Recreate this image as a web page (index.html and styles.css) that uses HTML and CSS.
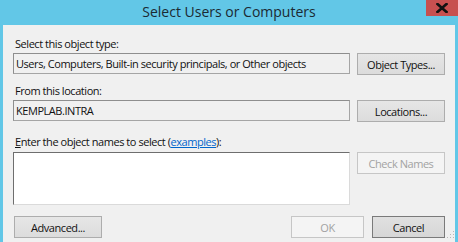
FILE: index.html
```html
<!DOCTYPE html>
<html>
<head>
<meta charset="utf-8">
<link rel="stylesheet" href="styles.css">
</head>
<body>
<div class="window">
  <div class="titlebar">
    <span class="title">Select Users or Computers</span>
    <div class="close"><svg width="12" height="10" viewBox="0 0 12 10"><path d="M1.5 1 L10.5 9 M10.5 1 L1.5 9" stroke="#111" stroke-width="2.6" stroke-linecap="square"/></svg></div>
  </div>
  <div class="client">
    <div class="label l1">Select this object type:</div>
    <div class="row r1">
      <div class="field">Users, Computers, Built-in security principals, or Other objects</div>
      <div class="btn">Object Types...</div>
    </div>
    <div class="label l2">From this location:</div>
    <div class="row r2">
      <div class="field">KEMPLAB.INTRA</div>
      <div class="btn">Locations...</div>
    </div>
    <div class="label l3"><span class="u">E</span>nter the object names to select (<span class="link">examples</span>):</div>
    <div class="row r3">
      <div class="area"></div>
      <div class="btn disabled">Check Names</div>
    </div>
    <div class="bottom">
      <div class="btn wide">Advanced...</div>
      <div class="spacer"></div>
      <div class="btn ok disabled">OK</div>
      <div class="btn cancel">Cancel</div>
    </div>
    <svg class="grip" width="10" height="10" viewBox="0 0 10 10"><g fill="#b8b8b8"><rect x="8" y="0" width="1" height="1"/><rect x="5" y="3" width="1" height="1"/><rect x="8" y="3" width="1" height="1"/><rect x="2" y="6" width="1" height="1"/><rect x="5" y="6" width="1" height="1"/><rect x="8" y="6" width="1" height="1"/></g></svg>
  </div>
</div>
</body>
</html>
```
FILE: styles.css
```css
html, body {
  margin: 0;
  padding: 0;
}
body {
  width: 458px;
  height: 242px;
  overflow: hidden;
  font-family: "Segoe UI", "Open Sans", sans-serif;
  font-size: 11px;
  letter-spacing: -0.45px;
  color: #111;
}
.window {
  background: #62c7e7;
  width: 458px;
  height: 242px;
  padding: 0 3px;
  box-sizing: border-box;
  display: flex;
  flex-direction: column;
  position: relative;
}
.titlebar {
  height: 25px;
  display: flex;
  align-items: center;
  justify-content: center;
}
.title {
  font-size: 14px;
  letter-spacing: 0;
  color: #1b2a33;
  margin-top: -2px;
}
.close {
  position: absolute;
  top: 0;
  right: 0;
  width: 32px;
  height: 16px;
  background: #c75050;
  display: flex;
  align-items: center;
  justify-content: center;
}
.client {
  flex: 1;
  background: #f0f0f0;
  padding: 0 10px;
  display: flex;
  flex-direction: column;
  position: relative;
}
.label {
  height: 15px;
  line-height: 15px;
  padding-left: 2px;
  white-space: nowrap;
}
.l1 { margin-top: 11px; }
.l2 { margin-top: 8px; }
.l3 { margin-top: 12px; }
.u { text-decoration: underline; }
.link { color: #0066cc; text-decoration: underline; }
.row {
  display: grid;
  grid-template-columns: 337px 88px;
  column-gap: 7px;
  align-items: start;
  margin-top: 2px;
}
.r3 { margin-top: 3px; }
.field {
  height: 21px;
  box-sizing: border-box;
  border: 1px solid #a5a5a5;
  border-left-color: #8e8e8e;
  border-top-color: #8e8e8e;
  background: #f0f0f0;
  line-height: 19px;
  padding-left: 2px;
  white-space: nowrap;
  overflow: hidden;
}
.area {
  height: 53px;
  box-sizing: border-box;
  background: #fff;
  border: 1px solid #dadada;
  border-top-color: #6e6e6e;
  border-left-color: #6e6e6e;
}
.btn {
  height: 22px;
  box-sizing: border-box;
  border: 1px solid #adadad;
  background: linear-gradient(#e6e6e6, #dcdcdc);
  display: flex;
  align-items: center;
  justify-content: center;
  white-space: nowrap;
}
.btn.disabled {
  background: #f4f4f4;
  border-color: #c6c6c6;
  color: #a2a2a2;
}
.bottom {
  display: flex;
  margin-top: 11px;
  padding-left: 1px;
}
.wide { width: 88px; }
.spacer { flex: 1; }
.ok { width: 73px; margin-right: 8px; }
.cancel {
  width: 73px;
  border-color: #7a7a7a;
  background: linear-gradient(#e0e0e0, #d6d6d6);
}
.grip {
  position: absolute;
  right: 0;
  bottom: 1px;
}
```
